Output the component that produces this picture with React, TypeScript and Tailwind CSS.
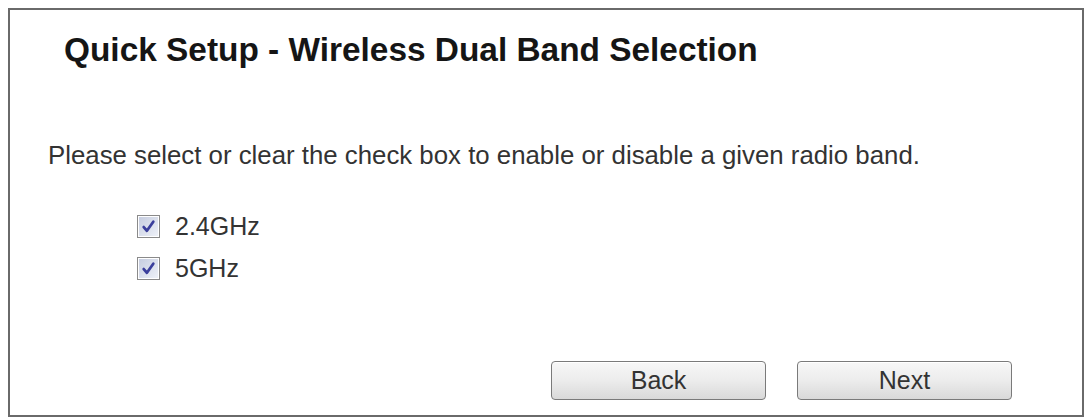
import React from 'react';

const Check = () => (
  <span className="flex h-[23px] w-[23px] items-center justify-center border border-[#8a8a8a] bg-white">
    <span className="flex h-[19px] w-[19px] items-center justify-center bg-gradient-to-br from-[#c6cde0] to-[#eef1f8]">
      <svg width="17" height="17" viewBox="0 0 16 16">
        <path d="M3.5 8.5 L6.5 12 L12.5 3.5" fill="none" stroke="#3b3f9c" strokeWidth="2.6" strokeLinecap="round" strokeLinejoin="round" />
      </svg>
    </span>
  </span>
);

const Band = ({ label }: { label: string }) => (
  <label className="ml-[127px] flex h-[42px] items-center gap-[15px] text-[25px] leading-[42px] text-[#333]">
    <Check />
    <span>{label}</span>
  </label>
);

const Btn = ({ children }: { children: React.ReactNode }) => (
  <button className="h-[39px] w-[215px] rounded-[4px] border border-[#7a7a7a] bg-gradient-to-b from-[#f7f7f7] via-[#ececec] to-[#d9d9d9] text-[25px] leading-[37px] text-[#333] shadow-[inset_0_1px_0_#fff]">
    {children}
  </button>
);

export default function App() {
  return (
    <div className="h-[418px] w-[1092px] bg-white p-[8px] font-['Liberation_Sans',Arial,sans-serif]">
      <div className="flex h-[409px] w-[1076px] flex-col border-2 border-[#6a6a6a] bg-white">
        <h1 className="ml-[54px] mt-[20px] text-[33.4px] font-bold leading-[40px] text-[#151515]">
          Quick Setup - Wireless Dual Band Selection
        </h1>
        <p className="ml-[38px] mt-[70px] text-[25.8px] leading-[30px] text-[#333]">
          Please select or clear the check box to enable or disable a given radio band.
        </p>
        <div className="mt-[35px] flex flex-col">
          <Band label="2.4GHz" />
          <Band label="5GHz" />
        </div>
        <div className="mb-[15px] mr-[70px] mt-auto flex justify-end gap-[31px]">
          <Btn>Back</Btn>
          <Btn>Next</Btn>
        </div>
      </div>
    </div>
  );
}
